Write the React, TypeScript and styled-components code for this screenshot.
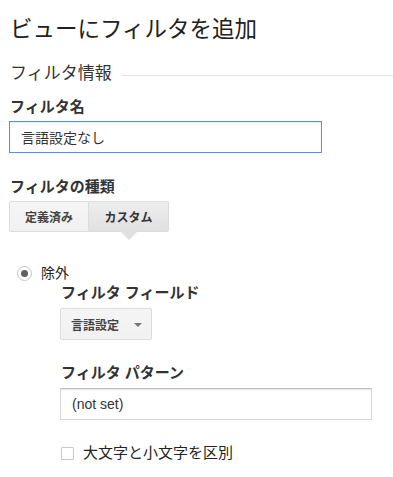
import React, { useState } from "react";
import styled, { createGlobalStyle } from "styled-components";

const GlobalStyle = createGlobalStyle`
  body {
    margin: 0;
    background: #fff;
    font-family: "Liberation Sans", Arial, "Noto Sans CJK JP", sans-serif;
    color: #222;
  }
`;

const Page = styled.div`
  padding: 0 0 0 9px;
  width: 393px;
  box-sizing: border-box;
`;

const Title = styled.h1`
  margin: 0;
  padding-top: 15px;
  font-size: 22.5px;
  font-weight: 400;
  line-height: 30px;
  color: #212121;
  padding-left: 1px;
`;

const Section = styled.div`
  display: flex;
  align-items: center;
  gap: 10px;
  margin-top: 18px;
  padding-left: 1px;
`;

const SectionTitle = styled.span`
  font-size: 17px;
  line-height: 22px;
  color: #333;
`;

const Rule = styled.div`
  flex: 1;
  height: 1px;
  background: #e2e2e2;
  margin-top: 2px;
`;

const Label = styled.div<{ $top: number }>`
  margin-top: ${(p) => p.$top}px;
  padding-left: 1px;
  font-size: 15px;
  font-weight: 700;
  line-height: 20px;
  color: #333;
`;

const TextInput = styled.input<{ $focus?: boolean; $width: number; $top: number }>`
  display: block;
  box-sizing: border-box;
  width: ${(p) => p.$width}px;
  height: 32px;
  margin-top: ${(p) => p.$top}px;
  padding: 0 11px;
  font-family: "Liberation Sans", Arial, "Noto Sans CJK JP", sans-serif;
  font-size: 14px;
  color: #333;
  background: #fff;
  border: 1px solid ${(p) => (p.$focus ? "#4d90fe" : "#d9d9d9")};
  border-top-color: ${(p) => (p.$focus ? "#4d90fe" : "#c0c0c0")};
  box-shadow: inset 0 1px 2px rgba(0, 0, 0, 0.1);
  outline: none;
`;

const Tabs = styled.div`
  display: flex;
  margin-top: 4px;
`;

const Tab = styled.button<{ $active?: boolean }>`
  position: relative;
  width: 80px;
  height: 31px;
  padding: 0;
  font-family: "Liberation Sans", Arial, "Noto Sans CJK JP", sans-serif;
  font-size: 12px;
  font-weight: 700;
  color: ${(p) => (p.$active ? "#333" : "#444")};
  background: ${(p) =>
    p.$active
      ? "linear-gradient(#eee, #e0e0e0)"
      : "linear-gradient(#f5f5f5, #f1f1f1)"};
  border: 1px solid #dcdcdc;
  border-left-width: ${(p) => (p.$active ? 0 : 1)}px;
  border-radius: ${(p) => (p.$active ? "0 2px 2px 0" : "2px 0 0 2px")};
  cursor: pointer;

  ${(p) =>
    p.$active &&
    `
    &::after {
      content: "";
      position: absolute;
      left: 50%;
      bottom: -9px;
      margin-left: -9px;
      border-left: 9px solid transparent;
      border-right: 9px solid transparent;
      border-top: 9px solid #e0e0e0;
    }
  `}
`;

const RadioRow = styled.label`
  display: flex;
  align-items: center;
  gap: 9px;
  margin-top: 31px;
  padding-left: 8px;
  font-size: 14px;
  line-height: 20px;
  color: #222;
`;

const Radio = styled.span`
  display: inline-flex;
  align-items: center;
  justify-content: center;
  width: 15px;
  height: 15px;
  box-sizing: border-box;
  border: 1px solid #c6c6c6;
  border-radius: 50%;
  background: #fff;

  &::after {
    content: "";
    width: 7px;
    height: 7px;
    border-radius: 50%;
    background: #606060;
  }
`;

const Indent = styled.div`
  padding-left: 51px;
`;

const Dropdown = styled.button`
  display: flex;
  align-items: center;
  gap: 15px;
  height: 32px;
  margin-top: 5px;
  padding: 0 9px 0 10px;
  font-family: "Liberation Sans", Arial, "Noto Sans CJK JP", sans-serif;
  font-size: 12px;
  font-weight: 700;
  color: #444;
  background: linear-gradient(#f5f5f5, #f1f1f1);
  border: 1px solid #dcdcdc;
  border-radius: 2px;
`;

const Caret = styled.span`
  width: 0;
  height: 0;
  border-left: 4px solid transparent;
  border-right: 4px solid transparent;
  border-top: 4px solid #777;
  margin-top: 2px;
`;

const CheckRow = styled.label`
  display: flex;
  align-items: center;
  gap: 9px;
  margin-top: 23px;
  padding-left: 1px;
  font-size: 15px;
  line-height: 20px;
  color: #222;
`;

const Check = styled.span`
  width: 13px;
  height: 13px;
  box-sizing: border-box;
  border: 1px solid #c6c6c6;
  border-radius: 1px;
  background: #fff;
`;

export default function App() {
  const [name, setName] = useState("言語設定なし");
  const [pattern, setPattern] = useState("(not set)");

  return (
    <Page>
      <GlobalStyle />
      <Title>ビューにフィルタを追加</Title>
      <Section>
        <SectionTitle>フィルタ情報</SectionTitle>
        <Rule />
      </Section>
      <Label $top={12}>フィルタ名</Label>
      <TextInput
        $focus
        $width={313}
        $top={4}
        value={name}
        onChange={(e) => setName(e.target.value)}
      />
      <Label $top={24}>フィルタの種類</Label>
      <Tabs>
        <Tab>定義済み</Tab>
        <Tab $active>カスタム</Tab>
      </Tabs>
      <RadioRow>
        <Radio />
        除外
      </RadioRow>
      <Indent>
        <Label $top={0}>フィルタ フィールド</Label>
        <Dropdown>
          言語設定
          <Caret />
        </Dropdown>
        <Label $top={23}>フィルタ パターン</Label>
        <TextInput
          $width={312}
          $top={5}
          value={pattern}
          onChange={(e) => setPattern(e.target.value)}
        />
        <CheckRow>
          <Check />
          大文字と小文字を区別
        </CheckRow>
      </Indent>
    </Page>
  );
}
